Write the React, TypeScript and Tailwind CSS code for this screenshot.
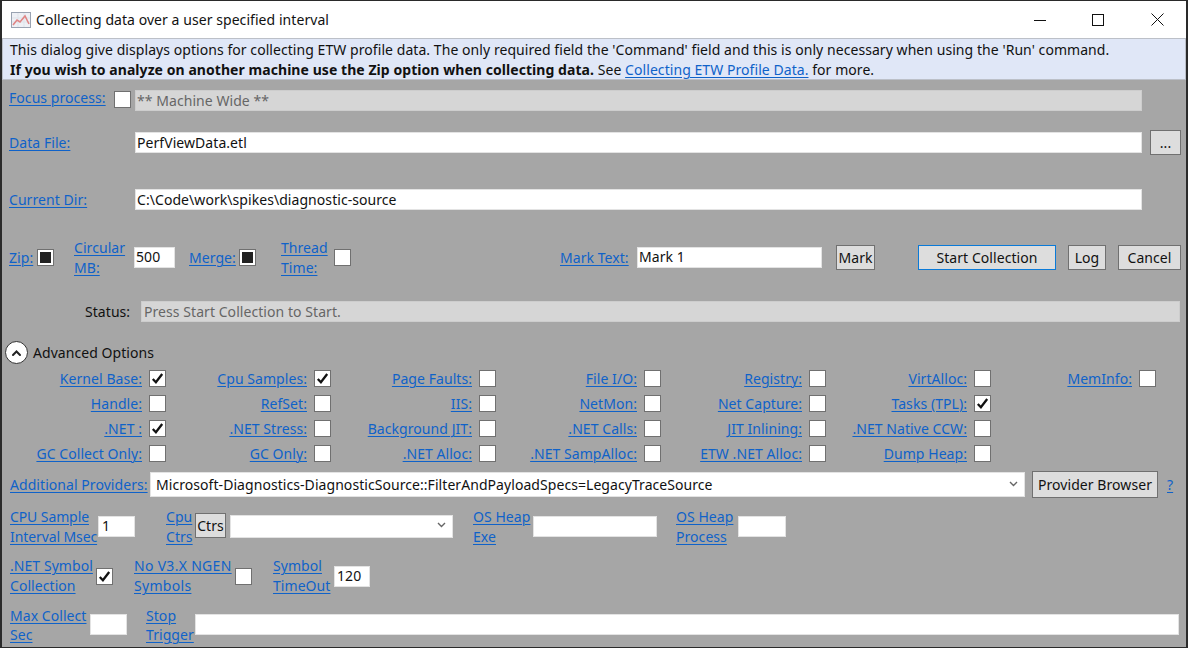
const FONT = "font-['Noto_Sans','Open_Sans',sans-serif]";

function Lnk({ children, className = "" }: { children: React.ReactNode; className?: string }) {
  return <a className={`shrink-0 text-[#0f62c9] underline underline-offset-[2px] decoration-1 whitespace-nowrap ${className}`}>{children}</a>;
}

function Two({ a, b, className = "", tight }: { a: string; b: string; className?: string; tight?: boolean }) {
  return (
    <div className={`flex flex-col shrink-0 ${tight ? "leading-[19px]" : "leading-[20px]"} ${className}`}>
      <Lnk>{a}</Lnk>
      <Lnk>{b}</Lnk>
    </div>
  );
}

function Check({ state, className = "" }: { state?: "check" | "fill"; className?: string }) {
  return (
    <span className={`flex h-[17px] w-[17px] shrink-0 items-center justify-center border border-[#707070] bg-white ${className}`}>
      {state === "check" && (
        <svg width="13" height="13" viewBox="0 0 13 13">
          <path d="M1.8 7 L4.9 10.2 L11.2 2" fill="none" stroke="#111" strokeWidth="2.3" />
        </svg>
      )}
      {state === "fill" && <span className="h-[11px] w-[11px] bg-[#222]" />}
    </span>
  );
}

function Field({ value = "", className = "", disabled }: { value?: string; className?: string; disabled?: boolean }) {
  return (
    <div className={`flex h-[21px] shrink-0 items-center border px-[1px] leading-none whitespace-nowrap ${disabled ? "bg-[#d6d6d6] border-[#cdcdcd] text-[#666]" : "bg-white border-[#e3e3e3] text-[#111]"} ${className}`}>
      {value}
    </div>
  );
}

function Btn({ children, className = "", focused }: { children: React.ReactNode; className?: string; focused?: boolean }) {
  return (
    <div className={`flex shrink-0 items-center justify-center border bg-[#dddddd] text-[#111] leading-none ${focused ? "border-[#0a7ad8]" : "border-[#707070]"} ${className}`}>
      {children}
    </div>
  );
}

function Chevron() {
  return (
    <svg width="9" height="6" viewBox="0 0 9 6" className="shrink-0 -mt-[2px]">
      <path d="M1 1 L4.5 4.5 L8 1" fill="none" stroke="#666" strokeWidth="1.4" />
    </svg>
  );
}

const OPTIONS: Array<[string, "check" | undefined]> = [
  ["Kernel Base:", "check"], ["Cpu Samples:", "check"], ["Page Faults:", undefined], ["File I/O:", undefined], ["Registry:", undefined], ["VirtAlloc:", undefined], ["MemInfo:", undefined],
  ["Handle:", undefined], ["RefSet:", undefined], ["IIS:", undefined], ["NetMon:", undefined], ["Net Capture:", undefined], ["Tasks (TPL):", "check"], ["", undefined],
  [".NET :", "check"], [".NET Stress:", undefined], ["Background JIT:", undefined], [".NET Calls:", undefined], ["JIT Inlining:", undefined], [".NET Native CCW:", undefined], ["", undefined],
  ["GC Collect Only:", undefined], ["GC Only:", undefined], [".NET Alloc:", undefined], [".NET SampAlloc:", undefined], ["ETW .NET Alloc:", undefined], ["Dump Heap:", undefined], ["", undefined],
];

export default function App() {
  return (
    <div className={`${FONT} flex h-[648px] w-[1188px] flex-col overflow-hidden border-x-[2px] border-t-[1px] border-b-[1px] border-[#2a2a2a] bg-[#a6a6a6] text-[14px] leading-[20px] tracking-[0.06px] text-[#111]`}>
      <div className="flex h-[37px] shrink-0 items-center bg-white pl-[9px]">
        <svg width="20" height="16" viewBox="0 0 20 16" className="shrink-0">
          <rect x="0.5" y="0.5" width="19" height="15" fill="#eef0f5" stroke="#9aa3b2" />
          <path d="M1 6 H19 M1 10 H19 M7 1 V15 M13 1 V15" stroke="#dfe3ea" />
          <path d="M2 13 L6 8 L9 10 L14 4 L18 12" fill="none" stroke="#e08585" strokeWidth="1.6" />
        </svg>
        <span className="ml-[5px] text-[14px]">Collecting data over a user specified interval</span>
        <div className="ml-auto flex items-center">
          <svg width="12" height="12" viewBox="0 0 12 12" className="mr-[46px]"><path d="M0 6.5 H12" stroke="#111" /></svg>
          <svg width="12" height="12" viewBox="0 0 12 12" className="mr-[47px]"><rect x="0.5" y="0.5" width="11" height="11" fill="none" stroke="#111" /></svg>
          <svg width="13" height="13" viewBox="0 0 13 13" className="mr-[22px]"><path d="M0.5 0.5 L12.5 12.5 M12.5 0.5 L0.5 12.5" stroke="#111" /></svg>
        </div>
      </div>

      <div className="h-[42px] shrink-0 border border-[#bcc0c8] bg-[#e0e7f7] pl-[7px] pt-[1px] text-[#111]">
        <div className="whitespace-nowrap">This dialog give displays options for collecting ETW profile data. The only required field the 'Command' field and this is only necessary when using the 'Run' command.</div>
        <div className="whitespace-nowrap">
          <b>If you wish to analyze on another machine use the Zip option when collecting data.</b> See <Lnk>Collecting ETW Profile Data.</Lnk> for more.
        </div>
      </div>

      <div className="flex flex-col pl-[7px] pr-[6px]">
        <div className="mt-[10px] flex h-[22px] items-start">
          <Lnk className="w-[105px] -mt-[2px]">Focus process:</Lnk>
          <Check className="mt-[1px]" />
          <Field disabled value="** Machine Wide **" className="ml-[4px] w-[1007px]" />
        </div>

        <div className="mt-[18px] flex h-[25px] items-center">
          <Lnk className="w-[126px]">Data File:</Lnk>
          <Field value="PerfViewData.etl" className="w-[1007px]" />
          <Btn className="ml-[8px] h-[25px] w-[31px]">...</Btn>
        </div>

        <div className="mt-[34px] flex h-[21px] items-center">
          <Lnk className="w-[126px]">Current Dir:</Lnk>
          <Field value="C:\Code\work\spikes\diagnostic-source" className="w-[1007px]" />
        </div>

        <div className="mt-[28px] flex h-[40px] items-center">
          <Lnk className="w-[24px]">Zip:</Lnk>
          <Check state="fill" className="ml-[4px] -mt-[2px]" />
          <Two a="Circular" b="MB:" className="ml-[20px] w-[51px]" />
          <Field value="500" className="ml-[9px] w-[41px] -mt-[2px]" />
          <Lnk className="ml-[14px] w-[46px]">Merge:</Lnk>
          <Check state="fill" className="ml-[4px] -mt-[2px]" />
          <Two a="Thread" b="Time:" className="ml-[25px] w-[46px]" />
          <Check className="ml-[7px] -mt-[2px]" />
          <Lnk className="ml-[209px] w-[67px]">Mark Text:</Lnk>
          <Field value="Mark 1" className="ml-[10px] w-[185px] -mt-[2px]" />
          <Btn className="ml-[14px] h-[25px] w-[39px] -mt-[1px]">Mark</Btn>
          <Btn focused className="ml-[43px] h-[25px] w-[138px] -mt-[1px]">Start Collection</Btn>
          <Btn className="ml-[12px] h-[25px] w-[38px] -mt-[1px]">Log</Btn>
          <Btn className="ml-[12px] h-[25px] w-[63px] -mt-[1px]">Cancel</Btn>
        </div>

        <div className="mt-[23px] flex h-[21px] items-center">
          <span className="ml-[76px] w-[56px]">Status:</span>
          <Field disabled value="Press Start Collection to Start." className="w-[1039px] px-[2px]" />
        </div>

        <div className="mt-[19px] flex h-[23px] items-center">
          <span className="-ml-[4px] flex h-[23px] w-[23px] items-center justify-center rounded-full border-[1.5px] border-[#333] bg-white">
            <svg width="11" height="8" viewBox="0 0 11 8"><path d="M2 6 L5.5 2.5 L9 6" fill="none" stroke="#222" strokeWidth="2" strokeLinecap="round" /></svg>
          </span>
          <span className="ml-[5px]">Advanced Options</span>
        </div>

        <div className="-ml-[7px] mt-[2px] grid grid-cols-[repeat(7,165px)] auto-rows-[25px]">
          {OPTIONS.map(([label, state], i) =>
            label ? (
              <div key={i} className="flex items-center justify-end pr-[1px]">
                <Lnk>{label}</Lnk>
                <Check state={state} className="ml-[7px]" />
              </div>
            ) : (
              <div key={i} />
            ),
          )}
        </div>

        <div className="mt-[5px] flex h-[27px] items-center">
          <Lnk className="ml-[1px] w-[137px]">Additional Providers:</Lnk>
          <div className="ml-[3px] flex h-[25px] w-[875px] shrink-0 items-center justify-between border border-[#e3e3e3] bg-white pl-[5px] pr-[6px] whitespace-nowrap">
            <span>Microsoft-Diagnostics-DiagnosticSource::FilterAndPayloadSpecs=LegacyTraceSource</span>
            <Chevron />
          </div>
          <Btn className="ml-[7px] h-[27px] w-[126px]">Provider Browser</Btn>
          <Lnk className="ml-[9px]">?</Lnk>
        </div>

        <div className="mt-[9px] flex h-[40px] items-center">
          <Two a="CPU Sample" b="Interval Msec" className="ml-[1px] w-[88px] tracking-[-0.1px]" />
          <Field value="1" className="w-[37px] px-[3px] -mt-[2px]" />
          <Two a="Cpu" b="Ctrs" className="ml-[31px] w-[27px]" />
          <Btn className="ml-[2px] h-[25px] w-[31px] -mt-[3px]">Ctrs</Btn>
          <div className="ml-[4px] -mt-[2px] flex h-[23px] w-[223px] shrink-0 items-center justify-end border border-[#e3e3e3] bg-white pr-[6px]">
            <Chevron />
          </div>
          <Two a="OS Heap" b="Exe" className="ml-[20px] w-[58px]" />
          <Field className="ml-[2px] w-[124px] -mt-[2px]" />
          <Two a="OS Heap" b="Process" className="ml-[19px] w-[58px]" />
          <Field className="ml-[4px] w-[48px] -mt-[2px]" />
        </div>

        <div className="mt-[9px] flex h-[40px] items-center">
          <Two a=".NET Symbol" b="Collection" className="ml-[1px] w-[83px]" />
          <Check state="check" className="ml-[3px]" />
          <Two a="No V3.X NGEN" b="Symbols" className="ml-[21px] w-[98px] tracking-[0.3px]" />
          <Check className="ml-[3px]" />
          <Two a="Symbol" b="TimeOut" className="ml-[21px] w-[57px]" />
          <Field value="120" className="ml-[4px] w-[36px] px-[2px]" />
        </div>

        <div className="mt-[9px] flex h-[40px] items-center">
          <Two tight a="Max Collect" b="Sec" className="ml-[1px] w-[80px]" />
          <Field className="w-[37px] -mt-[2px]" />
          <Two tight a="Stop" b="Trigger" className="ml-[19px] w-[46px]" />
          <Field className="ml-[3px] w-[984px] -mt-[2px]" />
        </div>
      </div>
    </div>
  );
}
